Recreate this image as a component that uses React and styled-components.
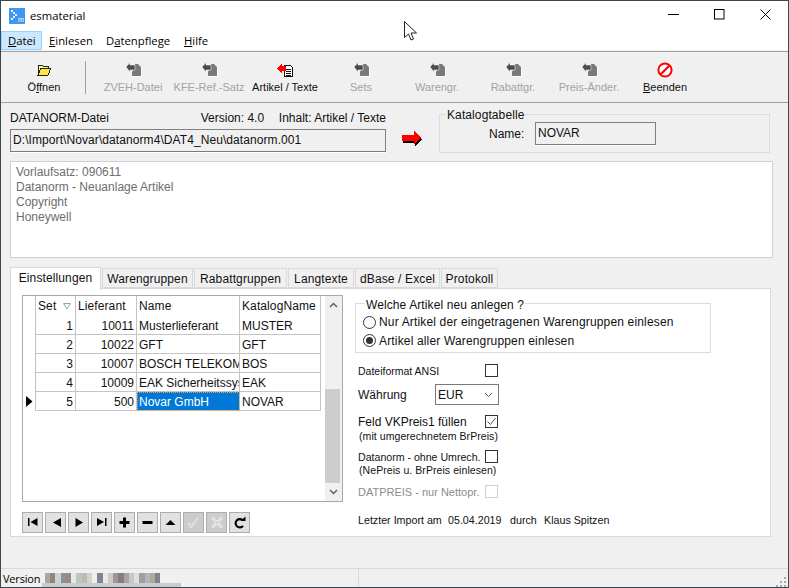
import React from 'react';
import styled, { createGlobalStyle } from 'styled-components';

const Global = createGlobalStyle`
  html, body { margin: 0; padding: 0; background: #f0f0f0; overflow: hidden; }
  * { box-sizing: border-box; }
`;

const sans = `"Liberation Sans", Arial, sans-serif`;
const ui = `"Open Sans", "Noto Sans", sans-serif`;

const Win = styled.div`
  position: relative; width: 789px; height: 588px; border: 1px solid #3c4850;
  background: #f0f0f0; display: flex; flex-direction: column; font: 12px ${sans}; color: #111; overflow: hidden;
`;
const TitleBar = styled.div`
  height: 30px; background: #fff; display: flex; align-items: center; padding-left: 8px; flex: none;
`;
const AppTitle = styled.span`margin: 0 0 2px 5px; font: 11.3px ${ui}; color: #000; flex: 1;`;
const WinBtn = styled.div`width: 46px; height: 30px; display: flex; align-items: center; justify-content: center; padding-bottom: 3px;`;
const MenuBar = styled.div`
  height: 20px; background: #fff; border-bottom: 1px solid #f0f0f0; display: flex; flex: none;
`;
const MenuItem = styled.div`
  height: 19px; width: ${p => p.$w}px; padding-left: 6px; font: 11.3px/18px ${ui}; color: #000; border: 1px solid ${p => p.$on ? '#99d1ff' : 'transparent'};
  background: ${p => p.$on ? '#cce8ff' : 'transparent'}; white-space: nowrap;
`;
const Toolbar = styled.div`
  height: 52px; border-top: 1px solid #a0a0a0; border-bottom: 1px solid #a0a0a0; display: flex; padding: 9px 0 0 5px; flex: none;
`;
const ToolBtn = styled.div`
  width: 76px; display: flex; flex-direction: column; align-items: center;
  color: ${p => p.$off ? '#a3a3a3' : '#101010'}; font: 11px/14px ${sans};
`;
const ToolIcon = styled.div`height: 17px; display: flex; align-items: center; justify-content: center;`;
const ToolLabel = styled.div`margin-top: 2px; white-space: nowrap;`;
const ToolSep = styled.div`width: 1px; height: 33px; background: #a0a0a0; margin: 0 9px 0 3px;`;

const Content = styled.div`padding-left: 9px; display: flex; flex-direction: column; flex: none;`;
const TopRow = styled.div`display: flex; margin-top: 4px; height: 46px;`;
const FileCol = styled.div`width: 376px;`;
const FileHead = styled.div`height: 20px; line-height: 22px; display: flex; white-space: nowrap;`;
const FileName = styled.span`width: 193px;`;
const FileVersion = styled.span`width: 79px;`;
const ReadField = styled.div`
  height: ${p => p.$h}px; width: ${p => p.$w}px; border: 1px solid #808080; background: #f0f0f0; border-bottom-color: #7a7a7a;
  padding-left: 2px; line-height: ${p => p.$h - 2}px; white-space: nowrap; box-shadow: 0 1px 0 #fff;
`;
const FileField = styled(ReadField)`margin-top: 2px; letter-spacing: .08px;`;
const ArrowSlot = styled.div`margin: 24px 0 0 16px; width: 21px; height: 18px; flex: none;`;
const CatGroup = styled.div`
  position: relative; margin: 7px 0 0 16px; width: 331px; height: 39px; border: 1px solid #dcdcdc;
  display: flex; align-items: center; padding-left: 49px;
`;
const Legend = styled.span`
  position: absolute; left: ${p => p.$l}px; top: ${p => p.$t}px; background: #${p => p.$bg || 'f0f0f0'}; padding: 0 1px; line-height: 14px; white-space: nowrap; letter-spacing: .1px;
`;
const CatLabel = styled.span`width: 46px;`;
const Memo = styled.div`
  margin-top: 8px; width: 763px; height: 97px; background: #fff; border: 1px solid #d0d0d0; padding: 3px 0 0 5px;
  color: #6d6d6d; line-height: 15px;
`;
const TabStrip = styled.div`margin-top: 9px; height: 21px; display: flex; align-items: flex-end; gap: 1px;`;
const Tab = styled.div`
  width: ${p => p.$w}px; height: ${p => p.$on ? 23 : 20}px; background: ${p => p.$on ? '#fff' : '#f0f0f0'};
  border: 1px solid #d9d9d9; border-bottom: ${p => p.$on ? 'none' : '1px solid #d9d9d9'}; text-align: center; letter-spacing: .12px;
  line-height: 20px; position: relative; z-index: ${p => p.$on ? 2 : 1}; margin-bottom: ${p => p.$on ? -2 : 0}px; white-space: nowrap;
`;
const TabPage = styled.div`
  width: 761px; height: 249px; background: #fff; border: 1px solid #d9d9d9; padding: 6px 0 0 11px; display: flex;
`;
const LeftCol = styled.div`width: 321px; flex: none;`;
const DataBox = styled.div`
  width: 321px; height: 207px; border: 1px solid #a8a8a8; display: flex;
`;
const Table = styled.div`
  width: 298px; display: grid; grid-template-columns: 13px 40px 61px 103px 81px; grid-auto-rows: 19px; grid-template-rows: 20px; align-content: start;
`;
const Cell = styled.div`
  border-right: 1px solid #c4c4c4; border-bottom: ${p => (p.$ind || p.$head) ? 'none' : '1px solid #c4c4c4'};
  padding: 1px 2px 0; overflow: hidden; white-space: nowrap; line-height: 18px; text-align: ${p => p.$r ? 'right' : 'left'};
  ${p => p.$ind ? 'display:flex;align-items:center;justify-content:center;padding:0;' : ''}
  ${p => p.$sel ? 'background:#0078d7;color:#fff;outline:1px dotted #f0a040;outline-offset:-1px;' : ''}
  ${p => p.$head ? 'position:relative;line-height:19px;letter-spacing:.1px;' : ''}
`;
const SortMark = styled.svg`position: absolute; right: 4px; top: 7px;`;
const ScrollBar = styled.div`margin-left: 4px; width: 17px; background: #f0f0f0; display: flex; flex-direction: column;`;
const ScrollArrow = styled.div`height: ${p => p.$h}px; display: flex; align-items: center; justify-content: center; flex: none;`;
const ScrollTrack = styled.div`flex: 1; padding-top: 76px;`;
const ScrollThumb = styled.div`width: 15px; height: 94px; background: #cdcdcd;`;
const Nav = styled.div`display: flex; gap: 2px; margin-top: 10px;`;
const NavBtn = styled.div`
  width: 21px; height: 21px; border: 1px solid #adadad; background: ${p => p.$off ? '#cccccc' : '#e1e1e1'};
  display: flex; align-items: center; justify-content: center;
`;
const RightCol = styled.div`margin-left: 12px; width: 380px; display: flex; flex-direction: column;`;
const ArtGroup = styled.div`
  position: relative; margin-top: 8px; width: 356px; height: 50px; border: 1px solid #dcdcdc; padding: 9px 0 0 7px;
`;
const RadioRow = styled.div`display: flex; align-items: center; height: 18.5px; gap: 3px; white-space: nowrap; letter-spacing: .16px;`;
const Radio = styled.span`
  width: 13px; height: 13px; border-radius: 50%; border: 1px solid #333; display: flex; align-items: center; justify-content: center; background: #fff; flex: none;
  &::after { content: ''; width: 7px; height: 7px; border-radius: 50%; background: ${p => p.$on ? '#333' : 'transparent'}; }
`;
const Options = styled.div`padding-left: 3px; display: flex; flex-direction: column;`;
const OptRow = styled.div`
  display: flex; align-items: center; height: ${p => p.$h || 13}px; margin-top: ${p => p.$mt}px; white-space: nowrap;
  font-size: ${p => p.$fs || 12}px; color: ${p => p.$off ? '#8c8c8c' : '#111'};
`;
const OptLabel = styled.span`width: ${p => p.$w || 127}px; flex: none;`;
const Check = styled.span`
  width: 13px; height: 13px; border: 1px solid ${p => p.$off ? '#cfcfcf' : '#333'}; background: #fff; display: flex; align-items: center; justify-content: center; flex: none;
`;
const Note = styled.div`margin-top: ${p => p.$mt}px; font-size: 10.5px; line-height: 14px; padding-left: 1px; white-space: nowrap; letter-spacing: .07px;`;
const Select = styled.div`
  width: 64px; height: 21px; border: 1px solid #7a7a7a; background: #fff; display: flex; align-items: center; justify-content: space-between; padding: 0 5px 0 2px;
`;
const ImportLine = styled.div`margin-top: 15px; line-height: 14px; font-size: 10.7px; display: flex; white-space: nowrap;`;
const ImportPart = styled.span`width: ${p => p.$w}px;`;
const StatusBar = styled.div`
  margin-top: auto; height: 19px; border-top: 1px solid #d9d9d9; display: flex; align-items: flex-start; flex: none; position: relative;
`;
const StatusVer = styled.div`width: 41px; padding-left: 2px; font: 11px/20px ${ui}; letter-spacing: -.2px; color: #000; flex: none;`;
const MosaicBox = styled.svg`margin-top: 3px; flex: none;`;
const StatusSep = styled.div`width: 1px; height: 18px; background: #d9d9d9; margin-left: 177px;`;
const Grip = styled.svg`margin-left: auto; margin-top: 8px; margin-right: 1px;`;
const CursorMark = styled.svg`position: absolute; left: 403px; top: 20px;`;

const AppIcon = () => (
  <svg width="16" height="16" viewBox="0 0 16 16">
    <rect width="16" height="16" fill="#3f97f0" />
    <g fill="#dff0ff">
      <rect x="2" y="2" width="2" height="2" /><rect x="4" y="4" width="2" height="2" /><rect x="6" y="6" width="2" height="2" />
      <rect x="4" y="8" width="2" height="2" /><rect x="2" y="10" width="2" height="2" />
    </g>
    <text x="9" y="14" fontSize="7" fill="#fff" fontFamily="Liberation Sans">m</text>
  </svg>
);
const Folder = () => (
  <svg width="15" height="12" viewBox="0 0 15 12" shapeRendering="crispEdges">
    <path d="M1 1h4l1 1h5v2H4L1 10z" fill="#fff6a0" stroke="#222" strokeWidth="1" />
    <path d="M1 11l3-7h10l-3 7z" fill="#ffe83a" stroke="#222" strokeWidth="1" />
  </svg>
);
const Horse = () => (
  <svg width="17" height="16" viewBox="0 0 17 16">
    <path d="M7 15V9.500l3-3.500V3h4l3 3v9z" fill="#fff" />
    <path d="M7 14V9.500L10 6V2h3l3 3v9z" fill="#7a7a7a" />
    <path d="M1 5L5 .5V3h5v5H5v2z" fill="#4d4d4d" stroke="#fff" strokeWidth=".5" />
  </svg>
);
const ArtikelIcon = () => (
  <svg width="18" height="16" viewBox="0 0 18 16" shapeRendering="crispEdges">
    <path d="M8.500 3.500h6l2 2v9h-8z" fill="#fff" stroke="#111" />
    <path d="M10 7h5M10 9h5M10 11h5M10 13h5" stroke="#111" />
    <path d="M1 6l5-5v3h4v5H6v3z" fill="#f00" />
  </svg>
);
const Ban = () => (
  <svg width="16" height="16" viewBox="0 0 16 16">
    <circle cx="8" cy="8" r="6.600" fill="#fff" stroke="#f00" strokeWidth="2" />
    <path d="M3.500 12.500L12.500 3.500" stroke="#f00" strokeWidth="2.200" />
  </svg>
);
const BigArrow = () => (
  <svg width="21" height="18" viewBox="0 0 21 18" shapeRendering="crispEdges">
    <path d="M1 5h12V1l7 7.500L13 16v-4H1z" fill="#000" />
    <path d="M0 4h12V0l7 6.500L12 13V10H0z" fill="#f00" />
  </svg>
);
const navPaths = {
  first: <path d="M5 5h1.500v8H5zM7.500 9l7-4v8z" />,
  prev: <path d="M7 9.500l8-4.500v9z" />,
  next: <path d="M14 9.500L6.500 5v9z" />,
  last: <path d="M5 5l7 4-7 4zM13 5h1.500v8H13z" />,
  plus: <path d="M8 4.500h3V8h3.500v3H11v3.500H8V11H4.500V8H8z" />,
  minus: <path d="M4.500 8h10v3h-10z" />,
  up: <path d="M4.500 12L9.500 7l5 5z" />,
};
const NavIcon = ({ k }) => <svg width="19" height="19" viewBox="0 0 19 19" fill="#000">{navPaths[k]}</svg>;
const NavCheck = () => (
  <svg width="19" height="19" viewBox="0 0 19 19" fill="none">
    <path d="M4.500 10l2.500 4 7-9" stroke="#f2f2f2" strokeWidth="2" /><path d="M4.500 10l2.500 4 7-9" stroke="#bdbdbd" strokeWidth=".7" />
  </svg>
);
const NavX = () => (
  <svg width="19" height="19" viewBox="0 0 19 19" fill="none">
    <path d="M5 4.500l10 10M15 4.500l-10 10" stroke="#f2f2f2" strokeWidth="2.600" /><path d="M5 4.500l10 10M15 4.500l-10 10" stroke="#bdbdbd" strokeWidth=".9" />
  </svg>
);
const NavRedo = () => (
  <svg width="19" height="19" viewBox="0 0 19 19" fill="none">
    <path d="M13 7.500A4.200 4.200 0 1 0 13 13" stroke="#000" strokeWidth="2.200" /><path d="M10.500 8h5V3.500z" fill="#000" />
  </svg>
);

const mosaic = ['#a9aa9f','#97857b','#cfd2cd','#8c9197','#9c8a82','#e6e8e6','#b9c7c2','#c3b9ae','#d5d3c9','#eeeeee','#7f8790','#e9e9e9','#cfcac4','#9a979a','#8a7b7c','#a4a5a8','#c5c9c4','#e0e0da','#9e9ea6','#b5b5b8','#a8ae9c','#7e8489'];
const Mosaic = () => (
  <MosaicBox width="139" height="15" viewBox="0 0 139 15" shapeRendering="crispEdges">
    {mosaic.map((c, i) => <rect key={i} x={3 + i * 5.240} y="1" width="5.300" height="10" fill={c} />)}
    <rect x="0" y="11" width="139" height="4" fill="#c9cdcd" />
  </MosaicBox>
);
const Caret = ({ up }) => (
  <svg width="9" height="6" viewBox="0 0 9 6" fill="none"><path d={up ? 'M1 5l3.500-3.500L8 5' : 'M1 1l3.500 3.500L8 1'} stroke="#606060" strokeWidth="1.500" /></svg>
);

const tools = [
  ['ZVEH-Datei', 1], ['KFE-Ref.-Satz', 1], ['Artikel / Texte', 0], ['Sets', 1], ['Warengr.', 1], ['Rabattgr.', 1], ['Preis-Änder.', 1],
];
const rows = [
  [1, 10011, 'Musterlieferant', 'MUSTER'],
  [2, 10022, 'GFT', 'GFT'],
  [3, 10007, 'BOSCH TELEKOM', 'BOS'],
  [4, 10009, 'EAK Sicherheitssysteme', 'EAK'],
  [5, 500, 'Novar GmbH', 'NOVAR'],
];

export default function App() {
  return (
    <Win>
      <Global />
      <TitleBar>
        <AppIcon />
        <AppTitle>esmaterial</AppTitle>
        <WinBtn><svg width="11" height="11" viewBox="0 0 11 11"><path d="M0 5.500h11" stroke="#000" /></svg></WinBtn>
        <WinBtn><svg width="11" height="11" viewBox="0 0 11 11" fill="none"><rect x=".5" y=".5" width="9.500" height="9.500" stroke="#000" /></svg></WinBtn>
        <WinBtn><svg width="11" height="11" viewBox="0 0 11 11"><path d="M.5.500l10 10M10.500.500l-10 10" stroke="#000" /></svg></WinBtn>
      </TitleBar>
      <MenuBar>
        <MenuItem $w={41} $on><u>D</u>atei</MenuItem>
        <MenuItem $w={57}><u>E</u>inlesen</MenuItem>
        <MenuItem $w={78}>D<u>a</u>tenpflege</MenuItem>
        <MenuItem $w={50}><u>H</u>ilfe</MenuItem>
      </MenuBar>
      <Toolbar>
        <ToolBtn><ToolIcon><Folder /></ToolIcon><ToolLabel>Ö<u>f</u>fnen</ToolLabel></ToolBtn>
        <ToolSep />
        {tools.map(([t, off]) => (
          <ToolBtn key={t} $off={!!off}>
            <ToolIcon>{off ? <Horse /> : <ArtikelIcon />}</ToolIcon>
            <ToolLabel>{t}</ToolLabel>
          </ToolBtn>
        ))}
        <ToolBtn><ToolIcon><Ban /></ToolIcon><ToolLabel><u>B</u>eenden</ToolLabel></ToolBtn>
      </Toolbar>
      <Content>
        <TopRow>
          <FileCol>
            <FileHead>
              <FileName>DATANORM-Datei</FileName>
              <FileVersion>Version: 4.0</FileVersion>
              <span>Inhalt: Artikel / Texte</span>
            </FileHead>
            <FileField $w={376} $h={23}>D:\Import\Novar\datanorm4\DAT4_Neu\datanorm.001</FileField>
          </FileCol>
          <ArrowSlot><BigArrow /></ArrowSlot>
          <CatGroup>
            <Legend $l={6} $t={-7}>Katalogtabelle</Legend>
            <CatLabel>Name:</CatLabel>
            <ReadField $w={121} $h={23}>NOVAR</ReadField>
          </CatGroup>
        </TopRow>
        <Memo>Vorlaufsatz: 090611<br />Datanorm - Neuanlage Artikel<br />Copyright<br />Honeywell</Memo>
        <TabStrip>
          <Tab $w={91} $on>Einstellungen</Tab>
          <Tab $w={91}>Warengruppen</Tab>
          <Tab $w={93}>Rabattgruppen</Tab>
          <Tab $w={66}>Langtexte</Tab>
          <Tab $w={85}>dBase / Excel</Tab>
          <Tab $w={57}>Protokoll</Tab>
        </TabStrip>
        <TabPage>
          <LeftCol>
            <DataBox>
              <Table>
                <Cell $ind />
                <Cell $head>Set<SortMark width="8" height="7" viewBox="0 0 8 7" fill="none"><path d="M.5.500h7L4 6z" stroke="#a0a0a0" /></SortMark></Cell>
                <Cell $head>Lieferant</Cell>
                <Cell $head>Name</Cell>
                <Cell $head>KatalogName</Cell>
                {rows.map(r => (
                  <React.Fragment key={r[0]}>
                    <Cell $ind>{r[0] === 5 && <svg width="7" height="11" viewBox="0 0 7 11"><path d="M0 0l6.500 5.500L0 11z" fill="#000" /></svg>}</Cell>
                    <Cell $r>{r[0]}</Cell>
                    <Cell $r>{r[1]}</Cell>
                    <Cell $sel={r[0] === 5}>{r[2]}</Cell>
                    <Cell>{r[3]}</Cell>
                  </React.Fragment>
                ))}
              </Table>
              <ScrollBar>
                <ScrollArrow $h={17}><Caret up /></ScrollArrow>
                <ScrollTrack><ScrollThumb /></ScrollTrack>
                <ScrollArrow $h={18}><Caret /></ScrollArrow>
              </ScrollBar>
            </DataBox>
            <Nav>
              {['first', 'prev', 'next', 'last', 'plus', 'minus', 'up'].map(k => <NavBtn key={k}><NavIcon k={k} /></NavBtn>)}
              <NavBtn $off><NavCheck /></NavBtn>
              <NavBtn $off><NavX /></NavBtn>
              <NavBtn><NavRedo /></NavBtn>
            </Nav>
          </LeftCol>
          <RightCol>
            <ArtGroup>
              <Legend $l={9} $t={-6} $bg="fff">Welche Artikel neu anlegen ?</Legend>
              <RadioRow><Radio />Nur Artikel der eingetragenen Warengruppen einlesen</RadioRow>
              <RadioRow><Radio $on />Artikel aller Warengruppen einlesen</RadioRow>
            </ArtGroup>
            <Options>
              <OptRow $mt={11} $fs={10.5}><OptLabel>Dateiformat ANSI</OptLabel><Check /></OptRow>
              <OptRow $mt={7} $h={21}>
                <OptLabel $w={77}>Währung</OptLabel>
                <Select>EUR<svg width="9" height="6" viewBox="0 0 9 6" fill="none"><path d="M1 1l3.500 3.500L8 1" stroke="#555" /></svg></Select>
              </OptRow>
              <OptRow $mt={10}>
                <OptLabel>Feld VKPreis1 füllen</OptLabel>
                <Check><svg width="11" height="11" viewBox="0 0 11 11" fill="none"><path d="M1.500 5.500l3 3 5-6.500" stroke="#555" /></svg></Check>
              </OptRow>
              <Note $mt={1}>(mit umgerechnetem BrPreis)</Note>
              <OptRow $mt={7} $fs={10.6}><OptLabel>Datanorm - ohne Umrech.</OptLabel><Check /></OptRow>
              <Note $mt={0}>(NePreis u. BrPreis einlesen)</Note>
              <OptRow $mt={8} $fs={11} $off><OptLabel>DATPREIS - nur Nettopr.</OptLabel><Check $off /></OptRow>
              <ImportLine>
                <ImportPart $w={90}>Letzter Import am</ImportPart>
                <ImportPart $w={62}>05.04.2019</ImportPart>
                <ImportPart $w={34}>durch</ImportPart>
                <span>Klaus Spitzen</span>
              </ImportLine>
            </Options>
          </RightCol>
        </TabPage>
      </Content>
      <StatusBar>
        <StatusVer>Version</StatusVer>
        <Mosaic />
        <StatusSep />
        <Grip width="11" height="10" viewBox="0 0 11 10" fill="#a8a8a8">
          <rect x="8" y="0" width="2" height="2" /><rect x="4" y="4" width="2" height="2" /><rect x="8" y="4" width="2" height="2" />
          <rect x="0" y="8" width="2" height="2" /><rect x="4" y="8" width="2" height="2" /><rect x="8" y="8" width="2" height="2" />
        </Grip>
      </StatusBar>
      <CursorMark width="14" height="21" viewBox="0 0 14 21"><path d="M.500.500v16l4-3.500 2.500 6 2.500-1-2.500-6h5.500z" fill="#fff" stroke="#222" /></CursorMark>
    </Win>
  );
}
